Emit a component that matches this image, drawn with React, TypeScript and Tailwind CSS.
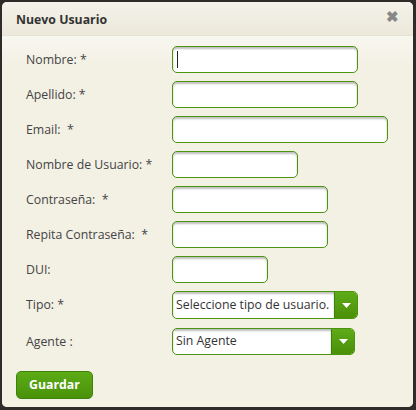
import React from 'react';

const fields = [
    { label: 'Nombre:', star: ' *', width: 'w-[186px]', focus: true },
    { label: 'Apellido:', star: ' *', width: 'w-[186px]' },
    { label: 'Email:', star: '  *', width: 'w-[216px]' },
    { label: 'Nombre de Usuario:', star: ' *', width: 'w-[126px]' },
    { label: 'Contraseña:', star: '  *', width: 'w-[156px]' },
    { label: 'Repita Contraseña:', star: '  *', width: 'w-[156px]' },
    { label: 'DUI:', star: '', width: 'w-[96px]' },
];

const Caret = () => (
    <svg width="9" height="5" viewBox="0 0 9 5">
        <path d="M0 0h9L4.5 5z" fill="#ffffff" />
    </svg>
);

const Select: React.FC<{ text: string; width: string; height: string }> = ({ text, width, height }) => (
    <div className={`flex ${width} ${height} rounded-[5px] border border-[#4b9410] overflow-hidden bg-white`}>
        <div className="flex-1 flex items-center px-[3px] text-[#333] shadow-[inset_0_2px_2px_rgba(0,0,0,0.25)] whitespace-nowrap overflow-hidden">
            {text}
        </div>
        <div className="w-[23px] flex items-center justify-center border-l border-[#3f7f0a] bg-gradient-to-b from-[#5eab18] to-[#4a9008]">
            <Caret />
        </div>
    </div>
);

const App: React.FC = () => {
    return (
        <div className="w-[416px] h-[410px] bg-[#2d2c28] p-[2px_3px_3px_2px]" style={{ fontFamily: '"Open Sans", "Noto Sans", sans-serif' }}>
            <div className="h-full rounded-[5px] bg-[#f3f0e4] flex flex-col overflow-hidden text-[12.3px]">
                <div className="h-[34px] flex items-center justify-between px-[14px] pt-[3px] bg-gradient-to-b from-[#f4f2ea] to-[#ece8da] border-b border-[#e6e2d4]">
                    <span className="font-bold text-[#333] text-[12.3px]">Nuevo Usuario</span>
                    <span className="text-[#888] font-bold text-[15px] -mt-[8px]">✖</span>
                </div>
                <div className="flex-1 flex flex-col px-[13px] pt-[10px] bg-gradient-to-b from-[#f8f7f0] to-[#f3f0e4] to-[30px]">
                    <div className="grid grid-cols-[146px_1fr] gap-y-[8px] pl-[11px] text-[#444]">
                        {fields.map((f) => (
                            <React.Fragment key={f.label}>
                                <div className="flex items-center whitespace-pre pt-[1px]">{f.label}{f.star}</div>
                                <div
                                    className={`${f.width} h-[27px] rounded-[5px] border border-[#4b9410] bg-white shadow-[inset_0_2px_2px_rgba(0,0,0,0.25)] flex items-center pl-[4px] ${f.focus ? 'shadow-[0_0_3px_#5fa020,inset_0_2px_2px_rgba(0,0,0,0.25)]' : ''}`}
                                >
                                    {f.focus && <div className="w-px h-[17px] bg-[#222]" />}
                                </div>
                            </React.Fragment>
                        ))}
                        <div className="flex items-center pt-[1px]">Tipo: *</div>
                        <Select text="Seleccione tipo de usuario." width="w-[186px]" height="h-[28px]" />
                        <div className="flex items-center mt-[1px] pt-[1px]">Agente :</div>
                        <div className="mt-[1px]">
                            <Select text="Sin Agente" width="w-[183px]" height="h-[27px]" />
                        </div>
                    </div>
                    <div className="mt-[16px] pl-[1px]">
                        <button className="w-[77px] h-[28px] rounded-[5px] border border-[#3e820a] bg-gradient-to-b from-[#5cab16] to-[#4a920a] text-white font-bold text-[12.3px]">
                            Guardar
                        </button>
                    </div>
                </div>
            </div>
        </div>
    );
};

export default App;
